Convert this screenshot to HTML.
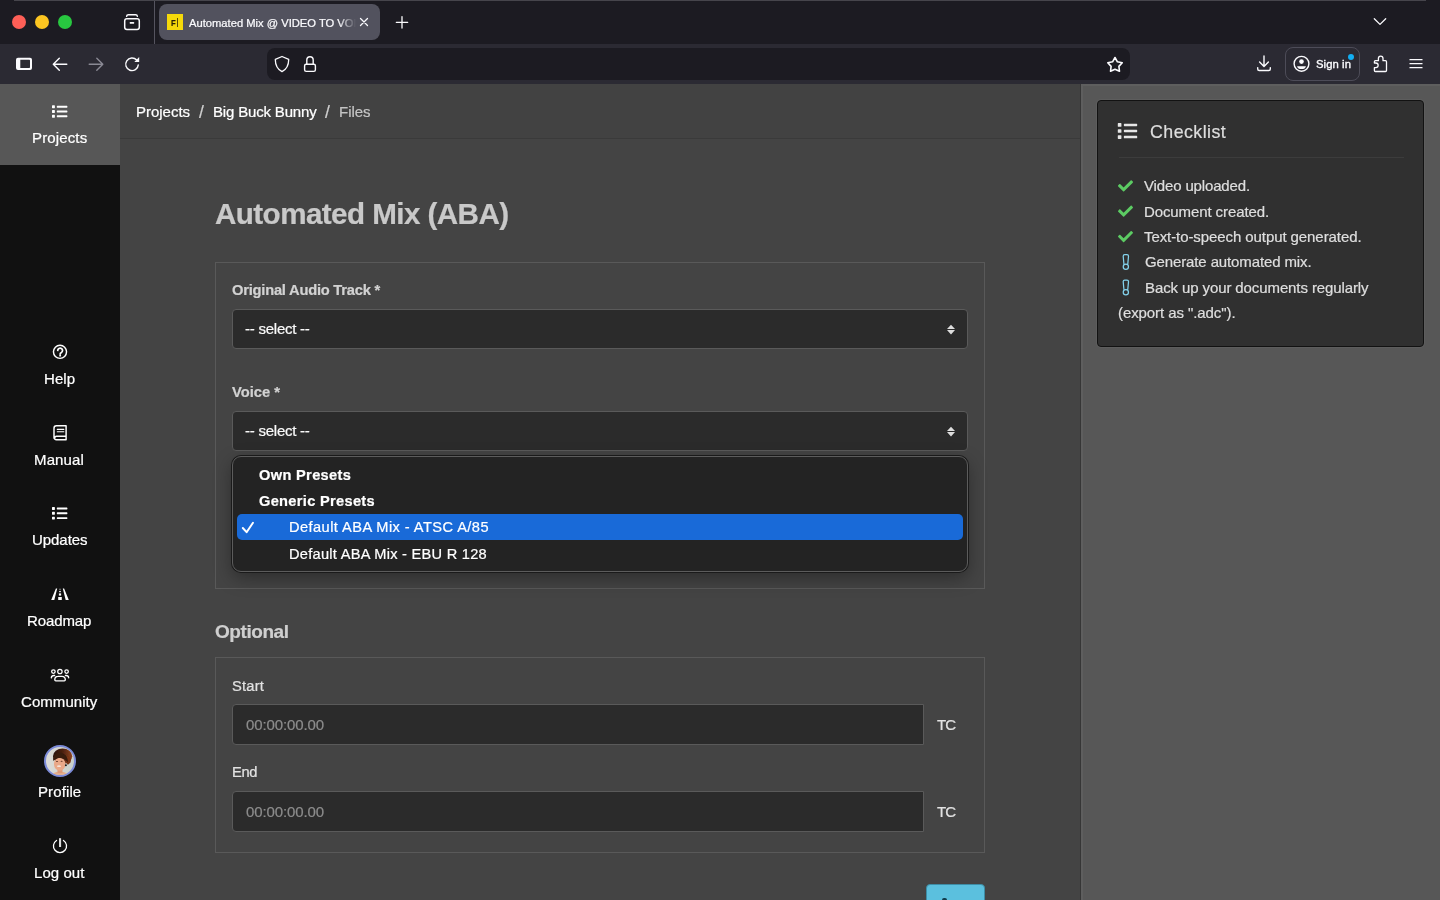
<!DOCTYPE html>
<html lang="en"><head><meta charset="utf-8"><title>Automated Mix @ VIDEO TO VOICE</title>
<style>
*{box-sizing:border-box;margin:0;padding:0}
html,body{width:1440px;height:900px;overflow:hidden;background:#444444;font-family:"Liberation Sans",sans-serif;color:#fff}
.tx{position:absolute;white-space:nowrap;line-height:1;display:block;will-change:transform;-webkit-text-stroke:.22px}
.a{position:absolute}
svg{position:absolute;overflow:visible}
#chrome{position:absolute;left:0;top:0;width:1440px;height:84px;background:#2b2a33}
#tabbar{position:absolute;left:0;top:0;width:1440px;height:44px;background:#1c1b22}
.tl{position:absolute;top:15px;width:14px;height:14px;border-radius:50%}
#tab{position:absolute;left:159px;top:4px;width:221px;height:36px;border-radius:8px;background:#52525e}
#url{position:absolute;left:267px;top:48px;width:863px;height:32px;border-radius:8px;background:#1c1b22}
#signin{position:absolute;left:1285px;top:47px;width:75px;height:34px;border-radius:8px;border:1px solid #4d4c58;background:transparent}
#side{position:absolute;left:0;top:84px;width:120px;height:816px;background:#111111}
#side .act{position:absolute;left:0;top:0;width:120px;height:81px;background:#575757}
#main{position:absolute;left:120px;top:84px;width:960px;height:816px;background:#444444}
#crumb{position:absolute;left:120px;top:84px;width:960px;height:55px;background:#424242;border-bottom:1px solid #3a3a3a}
#right{position:absolute;left:1080px;top:84px;width:360px;height:816px;background:#575757;border-left:1px solid #363636;box-shadow:inset 2px 2px 0 #5e5e5e}
#card{position:absolute;left:1097px;top:100px;width:327px;height:247px;background:#303030;border:1px solid #121212;border-radius:4px;box-shadow:0 0 0 1px rgba(255,255,255,.04)}
.box{position:absolute;border:1px solid #595959}
.inp{position:absolute;background:#2b2b2b;border:1px solid #5a5a5a;border-radius:4px}
#dd{position:absolute;left:232px;top:456px;width:736px;height:116px;background:#232323;border:1px solid #5c5c5c;border-radius:9px;box-shadow:0 0 0 1px #1a1a1a,0 6px 18px rgba(0,0,0,.35)}
#hl{position:absolute;left:237px;top:513.9px;width:726px;height:26.5px;background:#196ad8;border-radius:5px}
</style></head><body>

<div id="chrome">
 <div id="tabbar"></div>
 <div class="a" style="left:14px;top:0;width:1412px;height:1px;background:#46454c"></div>
 <div class="tl" style="left:12px;background:#fe5f57"></div>
 <div class="tl" style="left:35px;background:#fcc521"></div>
 <div class="tl" style="left:58px;background:#28c840"></div>
 <div class="a" style="left:154px;top:1px;width:1px;height:43px;background:#55545f"></div>
 <div id="tab"></div>
 <div class="a" style="left:167px;top:14px;width:16px;height:16px;background:#f5d90a"></div>
 <div class="a" style="left:177.3px;top:18px;width:.8px;height:9px;background:#5a4c08"></div>
 <div id="url"></div>
 <div id="signin"></div>
 <div class="a" style="left:1348px;top:53.9px;width:6.2px;height:6.2px;border-radius:50%;background:#12aef2"></div>
</div>
<div id="side"><div class="act"></div></div>
<div id="main"></div>
<div id="crumb"></div>
<div id="right"></div>
<div id="card"></div>
<div class="a" style="left:1119px;top:157px;width:285px;height:1px;background:#3c3c3c"></div>

<div class="box" style="left:215px;top:262px;width:770px;height:327px"></div>
<div class="inp" style="left:232px;top:309px;width:736px;height:40px"></div>
<div class="inp" style="left:232px;top:411px;width:736px;height:40px"></div>
<div id="dd"></div><div id="hl"></div>
<div class="box" style="left:215px;top:657px;width:770px;height:196px"></div>
<div class="inp" style="left:232px;top:704px;width:692px;height:41px;border-radius:4px 0 0 4px"></div>
<div class="inp" style="left:232px;top:791px;width:692px;height:41px;border-radius:4px 0 0 4px"></div>
<div class="a" style="left:926px;top:884.4px;width:59px;height:22px;background:#5bc0de;border-radius:4px;border:1px solid #3d8da6"></div>
<div class="a" style="left:942.4px;top:898.3px;width:4.2px;height:4px;background:#123c4c;border-radius:2px"></div>
<span class="tx" id="tabt" style="left:189px;top:18.00px;font-size:11.2px;font-weight:normal;color:#fbfbfe;width:168px;overflow:hidden;-webkit-mask-image:linear-gradient(90deg,#000 150px,transparent 167px);">Automated Mix @ VIDEO TO VOICE</span>
<span class="tx" id="fav" style="left:171.3px;top:19.01px;font-size:9px;font-weight:bold;color:#2a2205;transform:scaleX(.85);transform-origin:0 0;">F</span>
<span class="tx" id="signt" style="left:1315.7px;top:59.01px;font-size:11.3px;font-weight:normal;color:#fbfbfe;letter-spacing:0.065px;-webkit-text-stroke:.35px #fbfbfe;">Sign in</span>
<span class="tx" id="s1" style="left:31.6px;top:130.01px;font-size:15px;font-weight:normal;color:#ffffff;letter-spacing:0.139px;">Projects</span>
<span class="tx" id="s2" style="left:43.8px;top:371.00px;font-size:15px;font-weight:normal;color:#ffffff;letter-spacing:0.060px;">Help</span>
<span class="tx" id="s3" style="left:34.4px;top:452.01px;font-size:15px;font-weight:normal;color:#ffffff;letter-spacing:0.133px;">Manual</span>
<span class="tx" id="s4" style="left:31.6px;top:532.01px;font-size:15px;font-weight:normal;color:#ffffff;letter-spacing:-0.054px;">Updates</span>
<span class="tx" id="s5" style="left:27.4px;top:613.01px;font-size:15px;font-weight:normal;color:#ffffff;letter-spacing:-0.121px;">Roadmap</span>
<span class="tx" id="s6" style="left:21.3px;top:694.01px;font-size:15px;font-weight:normal;color:#ffffff;letter-spacing:0.060px;">Community</span>
<span class="tx" id="s7" style="left:38.0px;top:784.00px;font-size:15px;font-weight:normal;color:#ffffff;letter-spacing:0.110px;">Profile</span>
<span class="tx" id="s8" style="left:34.4px;top:865.01px;font-size:15px;font-weight:normal;color:#ffffff;letter-spacing:0.065px;">Log out</span>
<span class="tx" id="b1" style="left:136.3px;top:104.01px;font-size:15px;font-weight:normal;color:#ffffff;letter-spacing:-0.023px;">Projects</span>
<span class="tx" id="b2" style="left:198.6px;top:104.00px;font-size:17.5px;font-weight:normal;color:#cfcfcf;">/</span>
<span class="tx" id="b3" style="left:213px;top:104.01px;font-size:15px;font-weight:normal;color:#ffffff;letter-spacing:-0.172px;">Big Buck Bunny</span>
<span class="tx" id="b4" style="left:324.5px;top:104.00px;font-size:17.5px;font-weight:normal;color:#cfcfcf;">/</span>
<span class="tx" id="b5" style="left:338.5px;top:104.01px;font-size:15px;font-weight:normal;color:#c4c4c4;letter-spacing:-0.034px;">Files</span>
<span class="tx" id="h1" style="left:215px;top:199.01px;font-size:29.6px;font-weight:bold;color:#c9c9c9;letter-spacing:-0.561px;">Automated Mix (ABA)</span>
<span class="tx" id="l1" style="left:232px;top:283.00px;font-size:14.7px;font-weight:bold;color:#d2d2d2;letter-spacing:-0.223px;">Original Audio Track *</span>
<span class="tx" id="sel1" style="left:244.6px;top:321.01px;font-size:15px;font-weight:normal;color:#fafafa;letter-spacing:-0.242px;">-- select --</span>
<span class="tx" id="l2" style="left:232px;top:385.00px;font-size:14.7px;font-weight:bold;color:#d2d2d2;letter-spacing:0.013px;">Voice *</span>
<span class="tx" id="sel2" style="left:244.6px;top:423.01px;font-size:15px;font-weight:normal;color:#fafafa;letter-spacing:-0.242px;">-- select --</span>
<span class="tx" id="d1" style="left:258.9px;top:468.02px;font-size:14.6px;font-weight:bold;color:#ffffff;letter-spacing:0.343px;">Own Presets</span>
<span class="tx" id="d2" style="left:258.9px;top:494.01px;font-size:14.6px;font-weight:bold;color:#ffffff;letter-spacing:0.323px;">Generic Presets</span>
<span class="tx" id="d3" style="left:288.9px;top:520.01px;font-size:14.6px;font-weight:normal;color:#ffffff;letter-spacing:0.447px;">Default ABA Mix - ATSC A/85</span>
<span class="tx" id="d4" style="left:288.9px;top:547.00px;font-size:14.6px;font-weight:normal;color:#ffffff;letter-spacing:0.274px;">Default ABA Mix - EBU R 128</span>
<span class="tx" id="h2" style="left:214.7px;top:622.00px;font-size:19px;font-weight:bold;color:#cfcfcf;letter-spacing:-0.433px;">Optional</span>
<span class="tx" id="l3" style="left:232.2px;top:679.01px;font-size:14.7px;font-weight:normal;color:#e2e2e2;letter-spacing:0.194px;">Start</span>
<span class="tx" id="p1" style="left:245.5px;top:717.01px;font-size:15px;font-weight:normal;color:#8c8c8c;letter-spacing:-0.114px;">00:00:00.00</span>
<span class="tx" id="tc1" style="left:937px;top:717.01px;font-size:15px;font-weight:normal;color:#e2e2e2;letter-spacing:-1.000px;">TC</span>
<span class="tx" id="l4" style="left:232.2px;top:765.00px;font-size:14.7px;font-weight:normal;color:#e2e2e2;letter-spacing:-0.380px;">End</span>
<span class="tx" id="p2" style="left:245.5px;top:804.01px;font-size:15px;font-weight:normal;color:#8c8c8c;letter-spacing:-0.114px;">00:00:00.00</span>
<span class="tx" id="tc2" style="left:937px;top:804.01px;font-size:15px;font-weight:normal;color:#e2e2e2;letter-spacing:-1.000px;">TC</span>
<span class="tx" id="c0" style="left:1150px;top:124.01px;font-size:17.8px;font-weight:normal;color:#dddddd;letter-spacing:0.451px;">Checklist</span>
<span class="tx" id="c1" style="left:1144px;top:178.01px;font-size:15px;font-weight:normal;color:#dedede;letter-spacing:-0.145px;">Video uploaded.</span>
<span class="tx" id="c2" style="left:1144px;top:204.01px;font-size:15px;font-weight:normal;color:#dedede;letter-spacing:-0.102px;">Document created.</span>
<span class="tx" id="c3" style="left:1144px;top:229.01px;font-size:15px;font-weight:normal;color:#dedede;letter-spacing:-0.083px;">Text-to-speech output generated.</span>
<span class="tx" id="c4" style="left:1144.5px;top:254.01px;font-size:15px;font-weight:normal;color:#dedede;letter-spacing:-0.120px;">Generate automated mix.</span>
<span class="tx" id="c5" style="left:1144.5px;top:280.01px;font-size:15px;font-weight:normal;color:#dedede;letter-spacing:-0.103px;">Back up your documents regularly</span>
<span class="tx" id="c6" style="left:1118px;top:305.00px;font-size:15px;font-weight:normal;color:#dedede;letter-spacing:-0.081px;">(export as ".adc").</span><svg width="1440" height="900" viewBox="0 0 1440 900" style="left:0;top:0"><rect x="124.7" y="18.7" width="14.6" height="10.8" rx="2.2" fill="none" stroke="#fbfbfe" stroke-width="1.5"/>
<path d="M126.6 16.4 a1.8 1.8 0 0 1 1.8-1.6 h7.2 a1.8 1.8 0 0 1 1.8 1.6" fill="none" stroke="#fbfbfe" stroke-width="1.4" stroke-linecap="round" stroke-linejoin="round" />
<rect x="129.8" y="22" width="4.3" height="1.8" rx=".4" fill="#fbfbfe"/>
<path d="M360.5 18.5 L367.5 25.5 M367.5 18.5 L360.5 25.5" fill="none" stroke="#fbfbfe" stroke-width="1.3" stroke-linecap="round" stroke-linejoin="round" />
<path d="M396.3 22.3 H407.7 M402 16.6 V28" fill="none" stroke="#fbfbfe" stroke-width="1.3" stroke-linecap="round" stroke-linejoin="round" />
<path d="M1374.3 18.8 L1380 24.4 L1385.7 18.8" fill="none" stroke="#fbfbfe" stroke-width="1.3" stroke-linecap="round" stroke-linejoin="round" />
<path fill-rule="evenodd" fill="#fbfbfe" d="M18 57.8 h12 a2 2 0 0 1 2 2 v8.3 a2 2 0 0 1 -2 2 h-12 a2 2 0 0 1 -2 -2 v-8.3 a2 2 0 0 1 2 -2 z M20.3 59.8 v8.2 h9 a.7 .7 0 0 0 .7 -.7 v-6.8 a.7 .7 0 0 0 -.7 -.7 z"/>
<path d="M66.8 64.2 H53.6 M59.3 58.2 L53.3 64.2 L59.3 70.2" fill="none" stroke="#fbfbfe" stroke-width="1.4" stroke-linecap="round" stroke-linejoin="round" />
<path d="M89.2 64.2 H102.6 M96.8 58.2 L102.8 64.2 L96.8 70.2" fill="none" stroke="#8a8994" stroke-width="1.4" stroke-linecap="round" stroke-linejoin="round" />
<path d="M136.68 60.08 A6.3 6.3 0 1 0 138.28 64.85" fill="none" stroke="#fbfbfe" stroke-width="1.4" stroke-linecap="round" stroke-linejoin="round" />
<path d="M139.2 57 V61.9 H134.3 Z" fill="#fbfbfe"/>
<path d="M282 56.5 L288.7 59.4 C288.7 65 286.3 69.3 282 71.6 C277.7 69.3 275.3 65 275.3 59.4 Z" fill="none" stroke="#fbfbfe" stroke-width="1.3" stroke-linecap="round" stroke-linejoin="round" />
<rect x="304.6" y="64.2" width="10.8" height="7.2" rx="1.6" fill="none" stroke="#fbfbfe" stroke-width="1.4"/>
<path d="M306.8 64 V60 a3.2 3.3 0 0 1 6.4 0 V64" fill="none" stroke="#fbfbfe" stroke-width="1.4" stroke-linecap="round" stroke-linejoin="round" />
<polygon points="1115.00,57.50 1117.41,61.78 1122.23,62.75 1118.90,66.37 1119.47,71.25 1115.00,69.20 1110.53,71.25 1111.10,66.37 1107.77,62.75 1112.59,61.78" fill="none" stroke="#fbfbfe" stroke-width="1.6" stroke-linejoin="round"/>
<path d="M1264 56 V66.3 M1259.6 62 L1264 66.5 L1268.4 62" fill="none" stroke="#fbfbfe" stroke-width="1.4" stroke-linecap="round" stroke-linejoin="round" />
<path d="M1257.7 67.6 V69 a1.5 1.5 0 0 0 1.5 1.5 H1268.8 a1.5 1.5 0 0 0 1.5 -1.5 V67.6" fill="none" stroke="#fbfbfe" stroke-width="1.4" stroke-linecap="round" stroke-linejoin="round" />
<circle cx="1301.5" cy="63.8" r="7.4" fill="none" stroke="#fbfbfe" stroke-width="1.4"/>
<circle cx="1301.5" cy="61.6" r="2.3" fill="#fbfbfe"/>
<path d="M1297 66.2 H1306 A4.6 3.6 0 0 1 1297 66.2 Z" fill="#fbfbfe"/>
<path d="M1374.4 63 V61.7 a1 1 0 0 1 1-1 H1378.4 V58.5 a2.3 2.3 0 0 1 4.6 0 V60.7 H1385.5 a1 1 0 0 1 1 1 V70.5 a1 1 0 0 1 -1 1 H1375.4 a1 1 0 0 1 -1 -1 V67.7 H1375.8 a2.35 2.35 0 0 0 0 -4.7 Z" fill="none" stroke="#fbfbfe" stroke-width="1.3" stroke-linecap="round" stroke-linejoin="round" />
<path d="M1410 59.7 H1422 M1410 63.7 H1422 M1410 67.7 H1422" fill="none" stroke="#fbfbfe" stroke-width="1.3" stroke-linecap="round" stroke-linejoin="round" />
<path transform="translate(52 103.8) scale(0.03008)" d="M80 368H16a16 16 0 0 0-16 16v64a16 16 0 0 0 16 16h64a16 16 0 0 0 16-16v-64a16 16 0 0 0-16-16zm0-320H16A16 16 0 0 0 0 64v64a16 16 0 0 0 16 16h64a16 16 0 0 0 16-16V64a16 16 0 0 0-16-16zm0 160H16a16 16 0 0 0-16 16v64a16 16 0 0 0 16 16h64a16 16 0 0 0 16-16v-64a16 16 0 0 0-16-16zm416 176H176a16 16 0 0 0-16 16v32a16 16 0 0 0 16 16h320a16 16 0 0 0 16-16v-32a16 16 0 0 0-16-16zm0-320H176a16 16 0 0 0-16 16v32a16 16 0 0 0 16 16h320a16 16 0 0 0 16-16V80a16 16 0 0 0-16-16zm0 160H176a16 16 0 0 0-16 16v32a16 16 0 0 0 16 16h320a16 16 0 0 0 16-16v-32a16 16 0 0 0-16-16z" fill="#fff"/>
<circle cx="60" cy="351.8" r="6.55" fill="none" stroke="#fff" stroke-width="1.45"/>
<path d="M57.75 350.4 a2.4 2.3 0 1 1 3.7 2 q-1.3 .7 -1.3 1.6" fill="none" stroke="#fff" stroke-width="1.75" stroke-linecap="round" stroke-linejoin="round" stroke-linecap="butt"/>
<rect x="59.25" y="354.8" width="1.8" height="1.7" rx=".3" fill="#fff"/>
<path d="M66.1 425.8 H56.4 a2.4 2.4 0 0 0 -2.4 2.4 V437.4 a2.4 2.4 0 0 0 2.4 2.4 H66.1 Z M66.1 436.3 H56.5 a1.75 1.75 0 0 0 -1.75 1.75" fill="none" stroke="#fff" stroke-width="1.45" stroke-linecap="round" stroke-linejoin="round" />
<path d="M57.3 429.4 H63.8 M57.3 431.7 H63.8" fill="none" stroke="#fff" stroke-width="1.15" stroke-linecap="round" stroke-linejoin="round" stroke-linecap="butt"/>
<path transform="translate(52 505.6) scale(0.03008)" d="M80 368H16a16 16 0 0 0-16 16v64a16 16 0 0 0 16 16h64a16 16 0 0 0 16-16v-64a16 16 0 0 0-16-16zm0-320H16A16 16 0 0 0 0 64v64a16 16 0 0 0 16 16h64a16 16 0 0 0 16-16V64a16 16 0 0 0-16-16zm0 160H16a16 16 0 0 0-16 16v64a16 16 0 0 0 16 16h64a16 16 0 0 0 16-16v-64a16 16 0 0 0-16-16zm416 176H176a16 16 0 0 0-16 16v32a16 16 0 0 0 16 16h320a16 16 0 0 0 16-16v-32a16 16 0 0 0-16-16zm0-320H176a16 16 0 0 0-16 16v32a16 16 0 0 0 16 16h320a16 16 0 0 0 16-16V80a16 16 0 0 0-16-16zm0 160H176a16 16 0 0 0-16 16v32a16 16 0 0 0 16 16h320a16 16 0 0 0 16-16v-32a16 16 0 0 0-16-16z" fill="#fff"/>
<path d="M51.2 600 L55.9 588.6 H57.2 L54.3 600 Z M68.8 600 L64.1 588.6 H62.8 L65.7 600 Z" fill="#fff"/>
<rect x="59.4" y="588.7" width="1.2" height="1.2" fill="#aaa"/><rect x="59.2" y="590.9" width="1.6" height="1.3" fill="#fff"/><rect x="58.9" y="593.4" width="2.2" height="2.2" fill="#fff"/><rect x="58.2" y="597" width="3.6" height="3" fill="#fff"/>
<circle cx="59.9" cy="671.5" r="2.2" fill="none" stroke="#fff" stroke-width="1.25"/>
<circle cx="53.4" cy="671.6" r="1.75" fill="none" stroke="#fff" stroke-width="1.3"/>
<circle cx="66.6" cy="671.6" r="1.75" fill="none" stroke="#fff" stroke-width="1.3"/>
<path d="M57.9 676.4 H62.1 a3.2 3.2 0 0 1 3.2 3.2 V679.8 a1 1 0 0 1 -1 1 H55.8 a1 1 0 0 1 -1 -1 V679.6 a3.2 3.2 0 0 1 3.2 -3.2 Z" fill="none" stroke="#fff" stroke-width="1.35" stroke-linecap="round" stroke-linejoin="round" />
<path d="M51.3 677.8 a2.6 2.6 0 0 1 2.6 -2.3 H54.6 M68.7 677.8 a2.6 2.6 0 0 0 -2.6 -2.3 H65.4" fill="none" stroke="#fff" stroke-width="1.3" stroke-linecap="round" stroke-linejoin="round" />
<defs><clipPath id="avc"><circle cx="60" cy="761" r="14.1"/></clipPath>
<linearGradient id="hg" x1="0" x2="1" y1="0" y2="0"><stop offset="0" stop-color="#26120a"/><stop offset=".5" stop-color="#4a2110"/><stop offset="1" stop-color="#8f4420"/></linearGradient>
<linearGradient id="bgg" x1="0" x2="1" y1="0" y2="0"><stop offset="0" stop-color="#dddcd8"/><stop offset="1" stop-color="#c9d0ca"/></linearGradient>
<filter id="avb" x="-10%" y="-10%" width="120%" height="120%"><feGaussianBlur stdDeviation=".55"/></filter></defs>
<circle cx="60" cy="761" r="15" fill="url(#bgg)" stroke="#7c8bd8" stroke-width="2"/>
<g clip-path="url(#avc)"><g filter="url(#avb)">
<ellipse cx="60" cy="777.5" rx="9.5" ry="6" fill="#e5ad88"/>
<rect x="57.5" y="768" width="5" height="5" fill="#dd9a78"/>
<ellipse cx="62.6" cy="756.2" rx="9.6" ry="7.6" fill="url(#hg)"/>
<path d="M66 757 C70 756 72 759 70.5 762.5 C69.5 764 68.5 763.5 68 765 L65.5 762 Z" fill="#7a3618"/>
<ellipse cx="59.7" cy="764.2" rx="5.7" ry="6.5" fill="#eaa888"/>
<path d="M53.2 761 C52.6 754 58 751.5 62 753 C66 754.5 67.8 757.5 68 762.5 C66 759.5 62.5 757.6 58.8 758 C56.3 758.3 54.4 759.4 53.2 761 Z" fill="#371a0d"/>
<ellipse cx="59" cy="766.2" rx="2" ry=".85" fill="#f5e2d8"/>
<ellipse cx="57" cy="761.4" rx="1" ry=".5" fill="#5a3020"/><ellipse cx="61.6" cy="761.2" rx="1" ry=".5" fill="#5a3020"/>
<circle cx="65.9" cy="765.2" r="1" fill="#1a1a1a"/>
</g></g>
<path d="M63.47 840.45 A6.55 6.55 0 1 1 56.53 840.45" fill="none" stroke="#fff" stroke-width="1.3" stroke-linecap="round" stroke-linejoin="round" stroke-linecap="butt"/>
<rect x="59" y="838.2" width="2.1" height="8.8" fill="#dcdcdc"/>
<path d="M951 324.7 L955 328.9 H947 Z M951 334.4 L955 330.1 H947 Z" fill="#dedede"/>
<path d="M951 426.7 L955 430.9 H947 Z M951 436.4 L955 432.1 H947 Z" fill="#dedede"/>
<path d="M242.8 528 L246.6 532.2 L253 522.8" fill="none" stroke="#fff" stroke-width="2" stroke-linecap="round" stroke-linejoin="round" />
<path transform="translate(1117.8 121.3) scale(0.03789)" d="M80 368H16a16 16 0 0 0-16 16v64a16 16 0 0 0 16 16h64a16 16 0 0 0 16-16v-64a16 16 0 0 0-16-16zm0-320H16A16 16 0 0 0 0 64v64a16 16 0 0 0 16 16h64a16 16 0 0 0 16-16V64a16 16 0 0 0-16-16zm0 160H16a16 16 0 0 0-16 16v64a16 16 0 0 0 16 16h64a16 16 0 0 0 16-16v-64a16 16 0 0 0-16-16zm416 176H176a16 16 0 0 0-16 16v32a16 16 0 0 0 16 16h320a16 16 0 0 0 16-16v-32a16 16 0 0 0-16-16zm0-320H176a16 16 0 0 0-16 16v32a16 16 0 0 0 16 16h320a16 16 0 0 0 16-16V80a16 16 0 0 0-16-16zm0 160H176a16 16 0 0 0-16 16v32a16 16 0 0 0 16 16h320a16 16 0 0 0 16-16v-32a16 16 0 0 0-16-16z" fill="#e6e6e6"/>
<path transform="translate(1118 178.4) scale(0.02930)" d="M173.898 439.404l-166.4-166.4c-9.997-9.997-9.997-26.206 0-36.204l36.203-36.204c9.997-9.998 26.207-9.998 36.204 0L192 312.69 432.095 72.596c9.997-9.997 26.207-9.997 36.204 0l36.203 36.204c9.997 9.997 9.997 26.206 0 36.204l-294.4 294.401c-9.998 9.997-26.207 9.997-36.204-.001z" fill="#5ccb63"/>
<path transform="translate(1118 203.7) scale(0.02930)" d="M173.898 439.404l-166.4-166.4c-9.997-9.997-9.997-26.206 0-36.204l36.203-36.204c9.997-9.998 26.207-9.998 36.204 0L192 312.69 432.095 72.596c9.997-9.997 26.207-9.997 36.204 0l36.203 36.204c9.997 9.997 9.997 26.206 0 36.204l-294.4 294.401c-9.998 9.997-26.207 9.997-36.204-.001z" fill="#5ccb63"/>
<path transform="translate(1118 229.1) scale(0.02930)" d="M173.898 439.404l-166.4-166.4c-9.997-9.997-9.997-26.206 0-36.204l36.203-36.204c9.997-9.998 26.207-9.998 36.204 0L192 312.69 432.095 72.596c9.997-9.997 26.207-9.997 36.204 0l36.203 36.204c9.997 9.997 9.997 26.206 0 36.204l-294.4 294.401c-9.998 9.997-26.207 9.997-36.204-.001z" fill="#5ccb63"/>
<path d="M1123.2 256.20 a1.5 1.5 0 0 1 1.5 -1.5 h2.3 a1.5 1.5 0 0 1 1.5 1.5 l-.7 7.6 a.9 .9 0 0 1 -.9 .8 h-2.1 a.9 .9 0 0 1 -.9 -.8 z" fill="none" stroke="#84d2ec" stroke-width="1.25"/>
<circle cx="1125.85" cy="266.80" r="2.6" fill="#303030" stroke="#84d2ec" stroke-width="1.25"/>
<path d="M1123.2 281.60 a1.5 1.5 0 0 1 1.5 -1.5 h2.3 a1.5 1.5 0 0 1 1.5 1.5 l-.7 7.6 a.9 .9 0 0 1 -.9 .8 h-2.1 a.9 .9 0 0 1 -.9 -.8 z" fill="none" stroke="#84d2ec" stroke-width="1.25"/>
<circle cx="1125.85" cy="292.20" r="2.6" fill="#303030" stroke="#84d2ec" stroke-width="1.25"/></svg>
</body></html>
